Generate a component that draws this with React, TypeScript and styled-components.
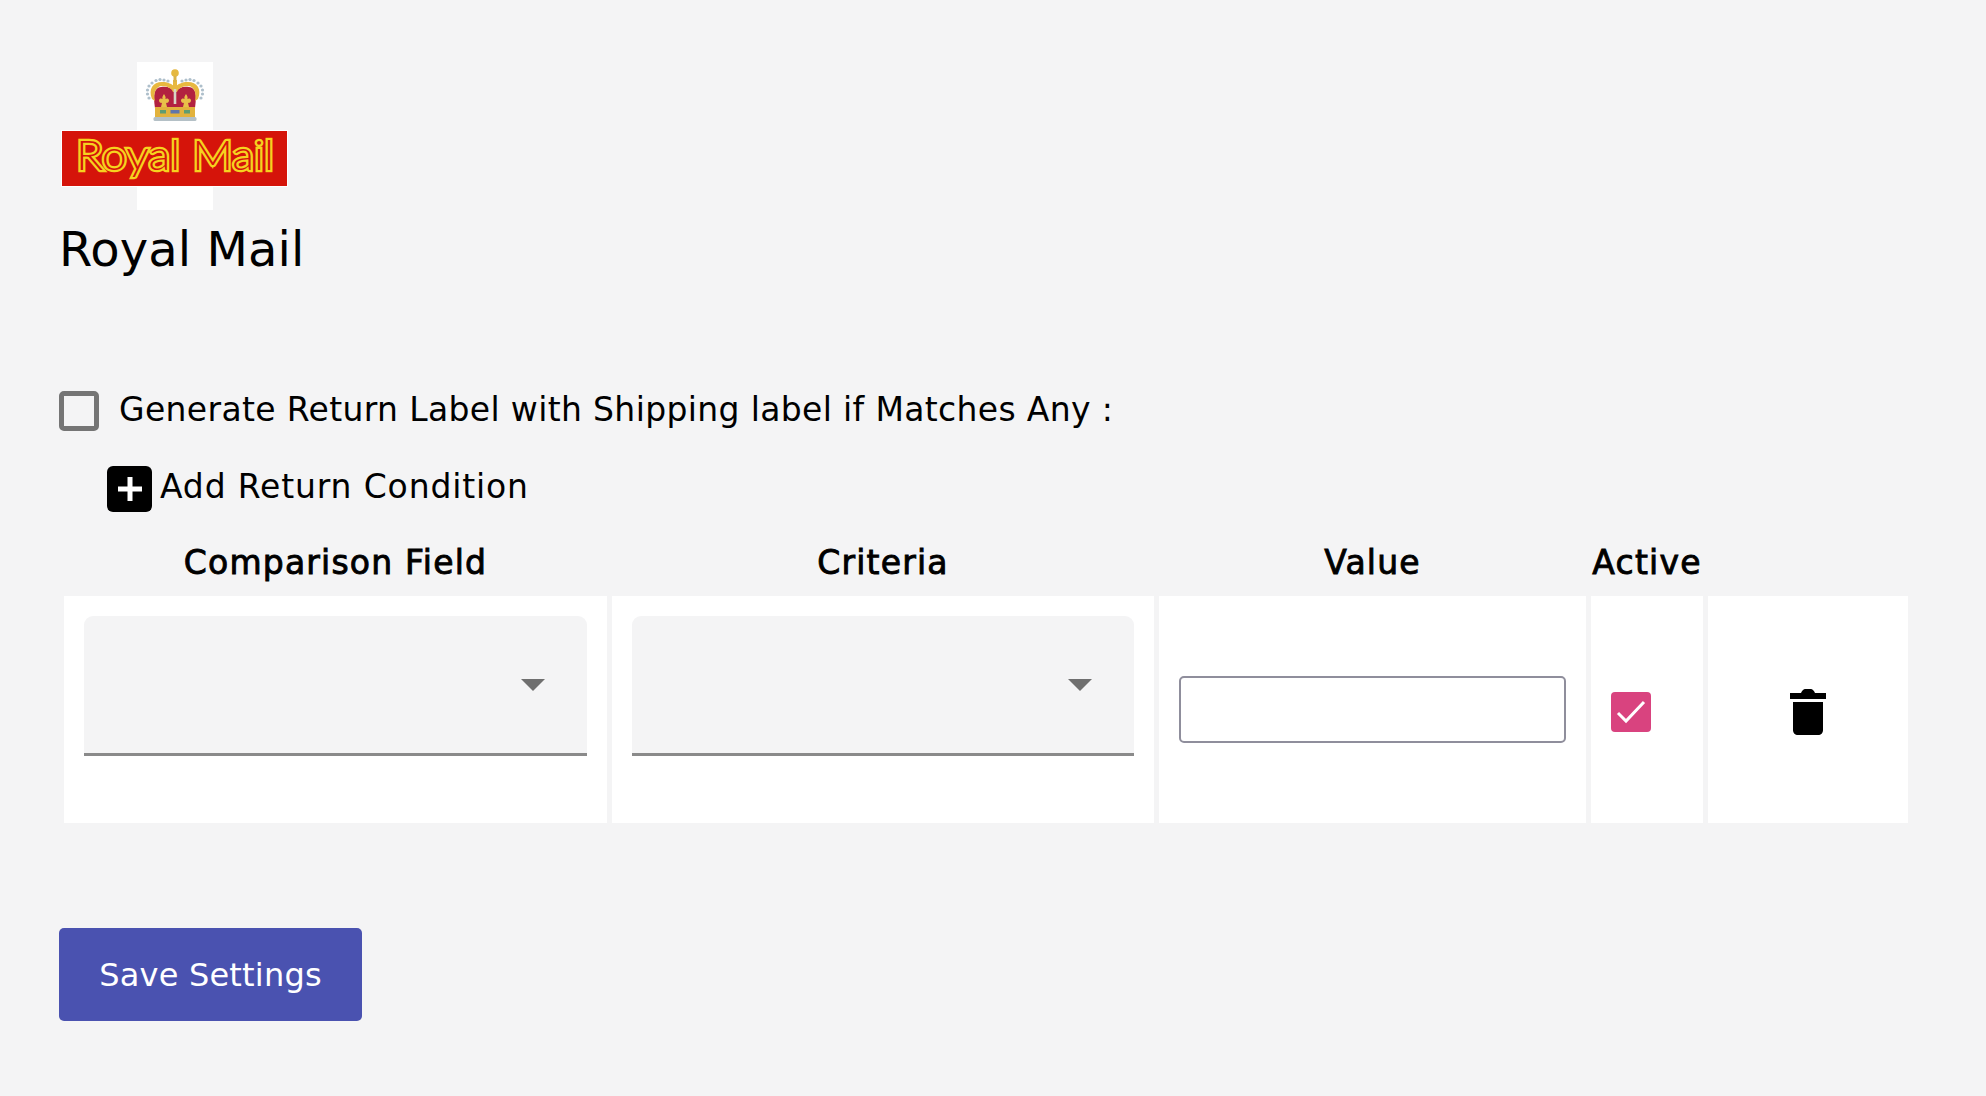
import styled, { createGlobalStyle } from 'styled-components';

const GlobalStyle = createGlobalStyle`
  html, body {
    margin: 0;
    background: #f4f4f5;
    font-family: "DejaVu Sans", "Liberation Sans", sans-serif;
    color: #000;
  }
`;

const COLUMNS = '543px 542px 427px 112px 200px';

const Page = styled.div`
  width: 1986px;
  height: 1096px;
  box-sizing: border-box;
  padding: 62px 0 0 59px;
  overflow: hidden;
`;

const Carrier = styled.div`
  margin-left: 2px;
  display: flex;
  flex-direction: column;
`;

const CarrierName = styled.h1`
  margin: 7px 0 0 -2px;
  height: 61px;
  font-size: 48px;
  line-height: 64px;
  font-weight: 400;
  letter-spacing: 0.1px;
`;

const ReturnRow = styled.label`
  margin-top: 113px;
  display: flex;
  align-items: center;
  gap: 20px;
  height: 40px;
  font-size: 33px;
  line-height: 38px;
  letter-spacing: 0.35px;
  white-space: nowrap;
`;

const ReturnText = styled.span`
  margin-top: -2px;
`;

const Checkbox = styled.span`
  width: 40px;
  height: 40px;
  box-sizing: border-box;
  border: 5px solid #757575;
  border-radius: 5px;
`;

const AddRow = styled.div`
  margin: 35px 0 0 48px;
  display: flex;
  align-items: flex-start;
  gap: 8px;
  height: 46px;
  font-size: 33px;
  line-height: 42px;
  letter-spacing: 0.85px;
`;

const AddButton = styled.span`
  width: 45px;
  height: 46px;
  background: #000;
  border-radius: 6px;
  display: flex;
  align-items: center;
  justify-content: center;
`;

const HeaderRow = styled.div`
  margin: 22px 0 0 5px;
  display: grid;
  grid-template-columns: ${COLUMNS};
  column-gap: 5px;
  height: 62px;
`;

const HeaderCell = styled.div`
  text-align: center;
  font-size: 33px;
  line-height: 58px;
  height: 62px;
  font-weight: 400;
  letter-spacing: 1.2px;
  -webkit-text-stroke: 0.9px #000;
  white-space: nowrap;
`;

const ConditionRow = styled.div`
  margin-left: 5px;
  display: grid;
  grid-template-columns: ${COLUMNS};
  column-gap: 5px;
  height: 227px;
`;

const Cell = styled.div<{ $align?: string }>`
  background: #fff;
  box-sizing: border-box;
  padding: 20px;
  display: flex;
  align-items: ${(p) => p.$align || 'center'};
`;

const DeleteCell = styled(Cell)`
  justify-content: center;
  padding-top: 25px;
`;

const ActiveCell = styled(Cell)`
  padding-top: 25px;
`;

const SelectBox = styled.div`
  width: 100%;
  height: 140px;
  box-sizing: border-box;
  background: #f4f4f5;
  border-bottom: 3px solid #8a8a8a;
  border-radius: 9px 9px 0 0;
  display: flex;
  justify-content: flex-end;
  padding: 63px 42px 0 0;
`;

const Caret = styled.span`
  width: 0;
  height: 0;
  border-left: 12px solid transparent;
  border-right: 12px solid transparent;
  border-top: 12px solid #6f6f6f;
`;

const ValueInput = styled.input`
  width: 100%;
  height: 67px;
  margin-top: -1px;
  box-sizing: border-box;
  background: #fff;
  border: 2px solid #8f8e9c;
  border-radius: 5px;
  outline: none;
`;

const ActiveCheck = styled.span`
  width: 40px;
  height: 40px;
  background: #d9437f;
  border-radius: 4px;
  display: flex;
  align-items: center;
  justify-content: center;
`;

const SaveButton = styled.button`
  display: block;
  margin-top: 105px;
  width: 303px;
  height: 93px;
  border: none;
  border-radius: 5px;
  background: #4a52b0;
  color: #fff;
  font-family: inherit;
  font-size: 32px;
  letter-spacing: 0.2px;
`;

function RoyalMailLogo() {
  // crown pearls, left half; the right half mirrors around x = 113
  const pearls = [
    [87, 36], [85.500, 32], [85.500, 28], [87, 24], [90, 21], [94, 18.500], [98, 17.500], [102, 18], [106, 19],
  ];
  return (
    <svg width="228" height="148" viewBox="0 0 228 148">
      <defs>
        <filter id="soft" x="-10%" y="-10%" width="120%" height="120%">
          <feGaussianBlur stdDeviation="0.55" />
        </filter>
        <path
          id="fleur"
          d="M0 0c1.500 2 2 3.500 1.400 5c1.300-1.200 3.400-.6 3.600 1.200c.2 1.800-1.500 3-3 2.600l1 4.200h-6l1-4.200c-1.500.4-3.200-.8-3-2.600c.2-1.800 2.300-2.400 3.600-1.200c-.6-1.500-.1-3 1.400-5z"
        />
      </defs>
      <rect x="76" width="76" height="148" fill="#fff" />
      <g filter="url(#soft)" transform="translate(1 0)">
        <path d="M93 46 C91 32 92 26 99 25 C105 24 110 26 113 30 C116 26 121 24 127 25 C134 26 135 32 133 46 Z" fill="#b2203f" />
        <path d="M90 37 C86 27 91 20 100 20 C106 20 110 22 113 25 C116 22 120 20 126 20 C135 20 140 27 136 37 L133 39 C135 31 132 24 126 24 C120 24 116 27 115 30 L111 30 C110 27 106 24 100 24 C94 24 91 31 93 39 Z" fill="#e8b840" />
        <rect x="111" y="18" width="4" height="9" fill="#e8b840" />
        <circle cx="113" cy="11" r="3.800" fill="#e5b840" />
        <rect x="111.500" y="14" width="3" height="6" fill="#d9b24a" />
        <rect x="111.700" y="27" width="2.600" height="15" fill="#d8d6c4" />
        {pearls.map(([cx, cy]) => (
          <g key={cx}>
            <circle cx={cx} cy={cy} r="1.600" fill="#aebfcb" />
            <circle cx={226 - cx} cy={cy} r="1.600" fill="#aebfcb" />
          </g>
        ))}
        <use href="#fleur" x="102" y="32" fill="#e8c04a" />
        <use href="#fleur" x="124" y="32" fill="#e8c04a" />
        <rect x="93" y="45" width="40" height="10" fill="#e2b23c" />
        <rect x="98" y="48" width="6" height="3.500" fill="#5f9c72" />
        <rect x="108.500" y="48" width="9" height="3.500" fill="#5f74aa" />
        <rect x="122" y="48" width="6" height="3.500" fill="#5f9c72" />
        <rect x="91.500" y="55" width="43" height="4" rx="1.500" fill="#b4c0c6" />
      </g>
      <rect x="0.500" y="68.500" width="226" height="56" fill="#d5140a" stroke="#fff" strokeWidth="1" />
      <g fontFamily='Lato, "Liberation Sans", sans-serif' fontSize="42" fontWeight="300">
        <text x="15" y="108" textLength="198" lengthAdjust="spacingAndGlyphs" fill="#f6d21f" stroke="#f6d21f" strokeWidth="4.400">
          Royal Mail
        </text>
        <text x="15" y="108" textLength="198" lengthAdjust="spacingAndGlyphs" fill="#d5140a">
          Royal Mail
        </text>
      </g>
    </svg>
  );
}

function PlusIcon() {
  return (
    <svg width="26" height="26" viewBox="0 0 26 26">
      <path d="M13 1v24M1 13h24" stroke="#fff" strokeWidth="5" />
    </svg>
  );
}

function CheckIcon() {
  return (
    <svg width="30" height="24" viewBox="0 0 30 24" fill="none">
      <path d="M2 13l8 8L28 2" stroke="#fff" strokeWidth="3" />
    </svg>
  );
}

function TrashIcon() {
  return (
    <svg width="36" height="46" viewBox="0 0 36 46">
      <path d="M0 4h11c1-2.600 3-4 4-4h6c1 0 3 1.400 4 4h11v6H0z" fill="#000" />
      <path d="M3 13h30v28c0 3-2 5-5 5H8c-3 0-5-2-5-5z" fill="#000" />
    </svg>
  );
}

export function App() {
  return (
    <Page>
      <GlobalStyle />
      <Carrier>
        <RoyalMailLogo />
        <CarrierName>Royal Mail</CarrierName>
      </Carrier>
      <ReturnRow>
        <Checkbox />
        <ReturnText>Generate Return Label with Shipping label if Matches Any :</ReturnText>
      </ReturnRow>
      <AddRow>
        <AddButton>
          <PlusIcon />
        </AddButton>
        Add Return Condition
      </AddRow>
      <HeaderRow>
        <HeaderCell>Comparison Field</HeaderCell>
        <HeaderCell>Criteria</HeaderCell>
        <HeaderCell>Value</HeaderCell>
        <HeaderCell>Active</HeaderCell>
      </HeaderRow>
      <ConditionRow>
        <Cell $align="flex-start">
          <SelectBox>
            <Caret />
          </SelectBox>
        </Cell>
        <Cell $align="flex-start">
          <SelectBox>
            <Caret />
          </SelectBox>
        </Cell>
        <Cell>
          <ValueInput />
        </Cell>
        <ActiveCell>
          <ActiveCheck>
            <CheckIcon />
          </ActiveCheck>
        </ActiveCell>
        <DeleteCell>
          <TrashIcon />
        </DeleteCell>
      </ConditionRow>
      <SaveButton>Save Settings</SaveButton>
    </Page>
  );
}

export default App;
